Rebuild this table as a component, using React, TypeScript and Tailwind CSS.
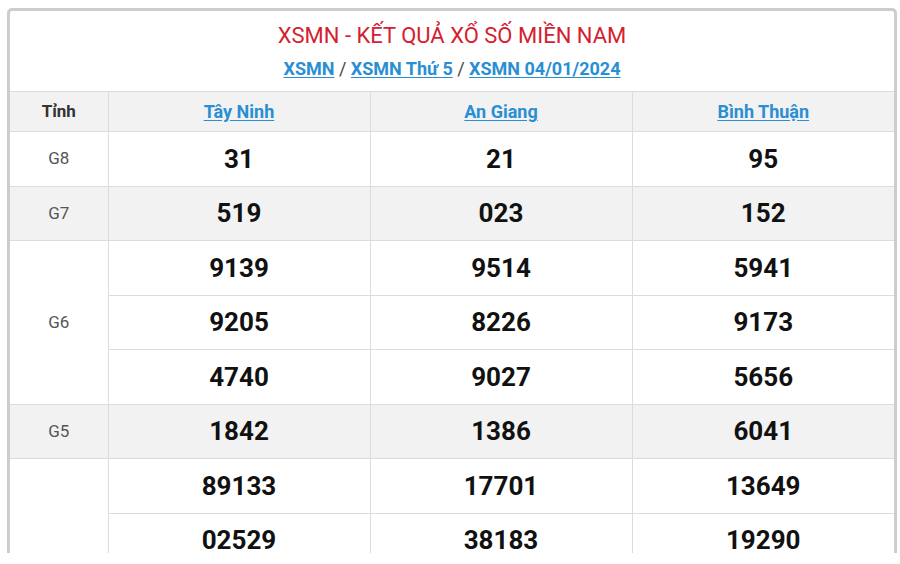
const provinces = ['Tây Ninh', 'An Giang', 'Bình Thuận'];

// each prize: label, rows of numbers (one per province), grey background or not
const prizes: { name: string; rows: string[][]; grey: boolean }[] = [
  { name: 'G8', rows: [['31', '21', '95']], grey: false },
  { name: 'G7', rows: [['519', '023', '152']], grey: true },
  {
    name: 'G6',
    rows: [
      ['9139', '9514', '5941'],
      ['9205', '8226', '9173'],
      ['4740', '9027', '5656'],
    ],
    grey: false,
  },
  { name: 'G5', rows: [['1842', '1386', '6041']], grey: true },
  {
    name: 'G4',
    rows: [
      ['89133', '17701', '13649'],
      ['02529', '38183', '19290'],
      ['', '', ''],
      ['', '', ''],
      ['', '', ''],
      ['', '', ''],
      ['', '', ''],
    ],
    grey: false,
  },
];

function App() {
  return (
    <div className="w-[900px] h-[564px] bg-white overflow-hidden font-['Roboto','Liberation_Sans',sans-serif]">
      <div className="ml-[7px] mt-[8px] w-[890px] h-[545px] overflow-hidden border-[3px] border-b-0 border-[#cdcdcd] rounded-t-[5px] bg-white">
        <div className="h-[80px] flex flex-col items-center">
          <h1 className="mt-[10px] text-[22px] leading-[30px] text-[#d4212f]">
            XSMN - KẾT QUẢ XỔ SỐ MIỀN NAM
          </h1>
          <div className="mt-[5px] text-[18px] leading-[26px] font-bold text-[#444]">
            <a className="text-[#2a8fd2] underline underline-offset-2">XSMN</a>
            <span className="font-normal"> / </span>
            <a className="text-[#2a8fd2] underline underline-offset-2">XSMN Thứ 5</a>
            <span className="font-normal"> / </span>
            <a className="text-[#2a8fd2] underline underline-offset-2">XSMN 04/01/2024</a>
          </div>
        </div>
        <table className="w-full border-collapse table-fixed">
          <colgroup>
            <col className="w-[98px]" />
            <col />
            <col />
            <col />
          </colgroup>
          <thead>
            <tr className="h-[40px] bg-[#f2f2f2]">
              <th className="border border-l-0 border-[#dcdcdc] text-[17px] font-bold text-[#333]">Tỉnh</th>
              {provinces.map((p, i) => (
                <th
                  key={p}
                  className={
                    'border border-[#dcdcdc] text-[18px] font-bold ' + (i === 2 ? 'border-r-0' : '')
                  }
                >
                  <a className="text-[#2a8fd2] underline underline-offset-2">{p}</a>
                </th>
              ))}
            </tr>
          </thead>
          <tbody>
            {prizes.map((prize) =>
              prize.rows.map((row, ri) => (
                <tr key={prize.name + ri} className={'h-[54.5px] ' + (prize.grey ? 'bg-[#f2f2f2]' : 'bg-white')}>
                  {ri === 0 && (
                    <td
                      rowSpan={prize.rows.length}
                      className="border border-l-0 border-[#dcdcdc] text-center text-[17px] text-[#555] bg-inherit"
                    >
                      {prize.name}
                    </td>
                  )}
                  {row.map((num, ci) => (
                    <td
                      key={ci}
                      className={
                        'border border-[#dcdcdc] text-center text-[26px] font-bold text-[#111] leading-none ' +
                        (ci === 2 ? 'border-r-0' : '')
                      }
                    >
                      {num}
                    </td>
                  ))}
                </tr>
              ))
            )}
          </tbody>
        </table>
      </div>
    </div>
  );
}

export default App;
